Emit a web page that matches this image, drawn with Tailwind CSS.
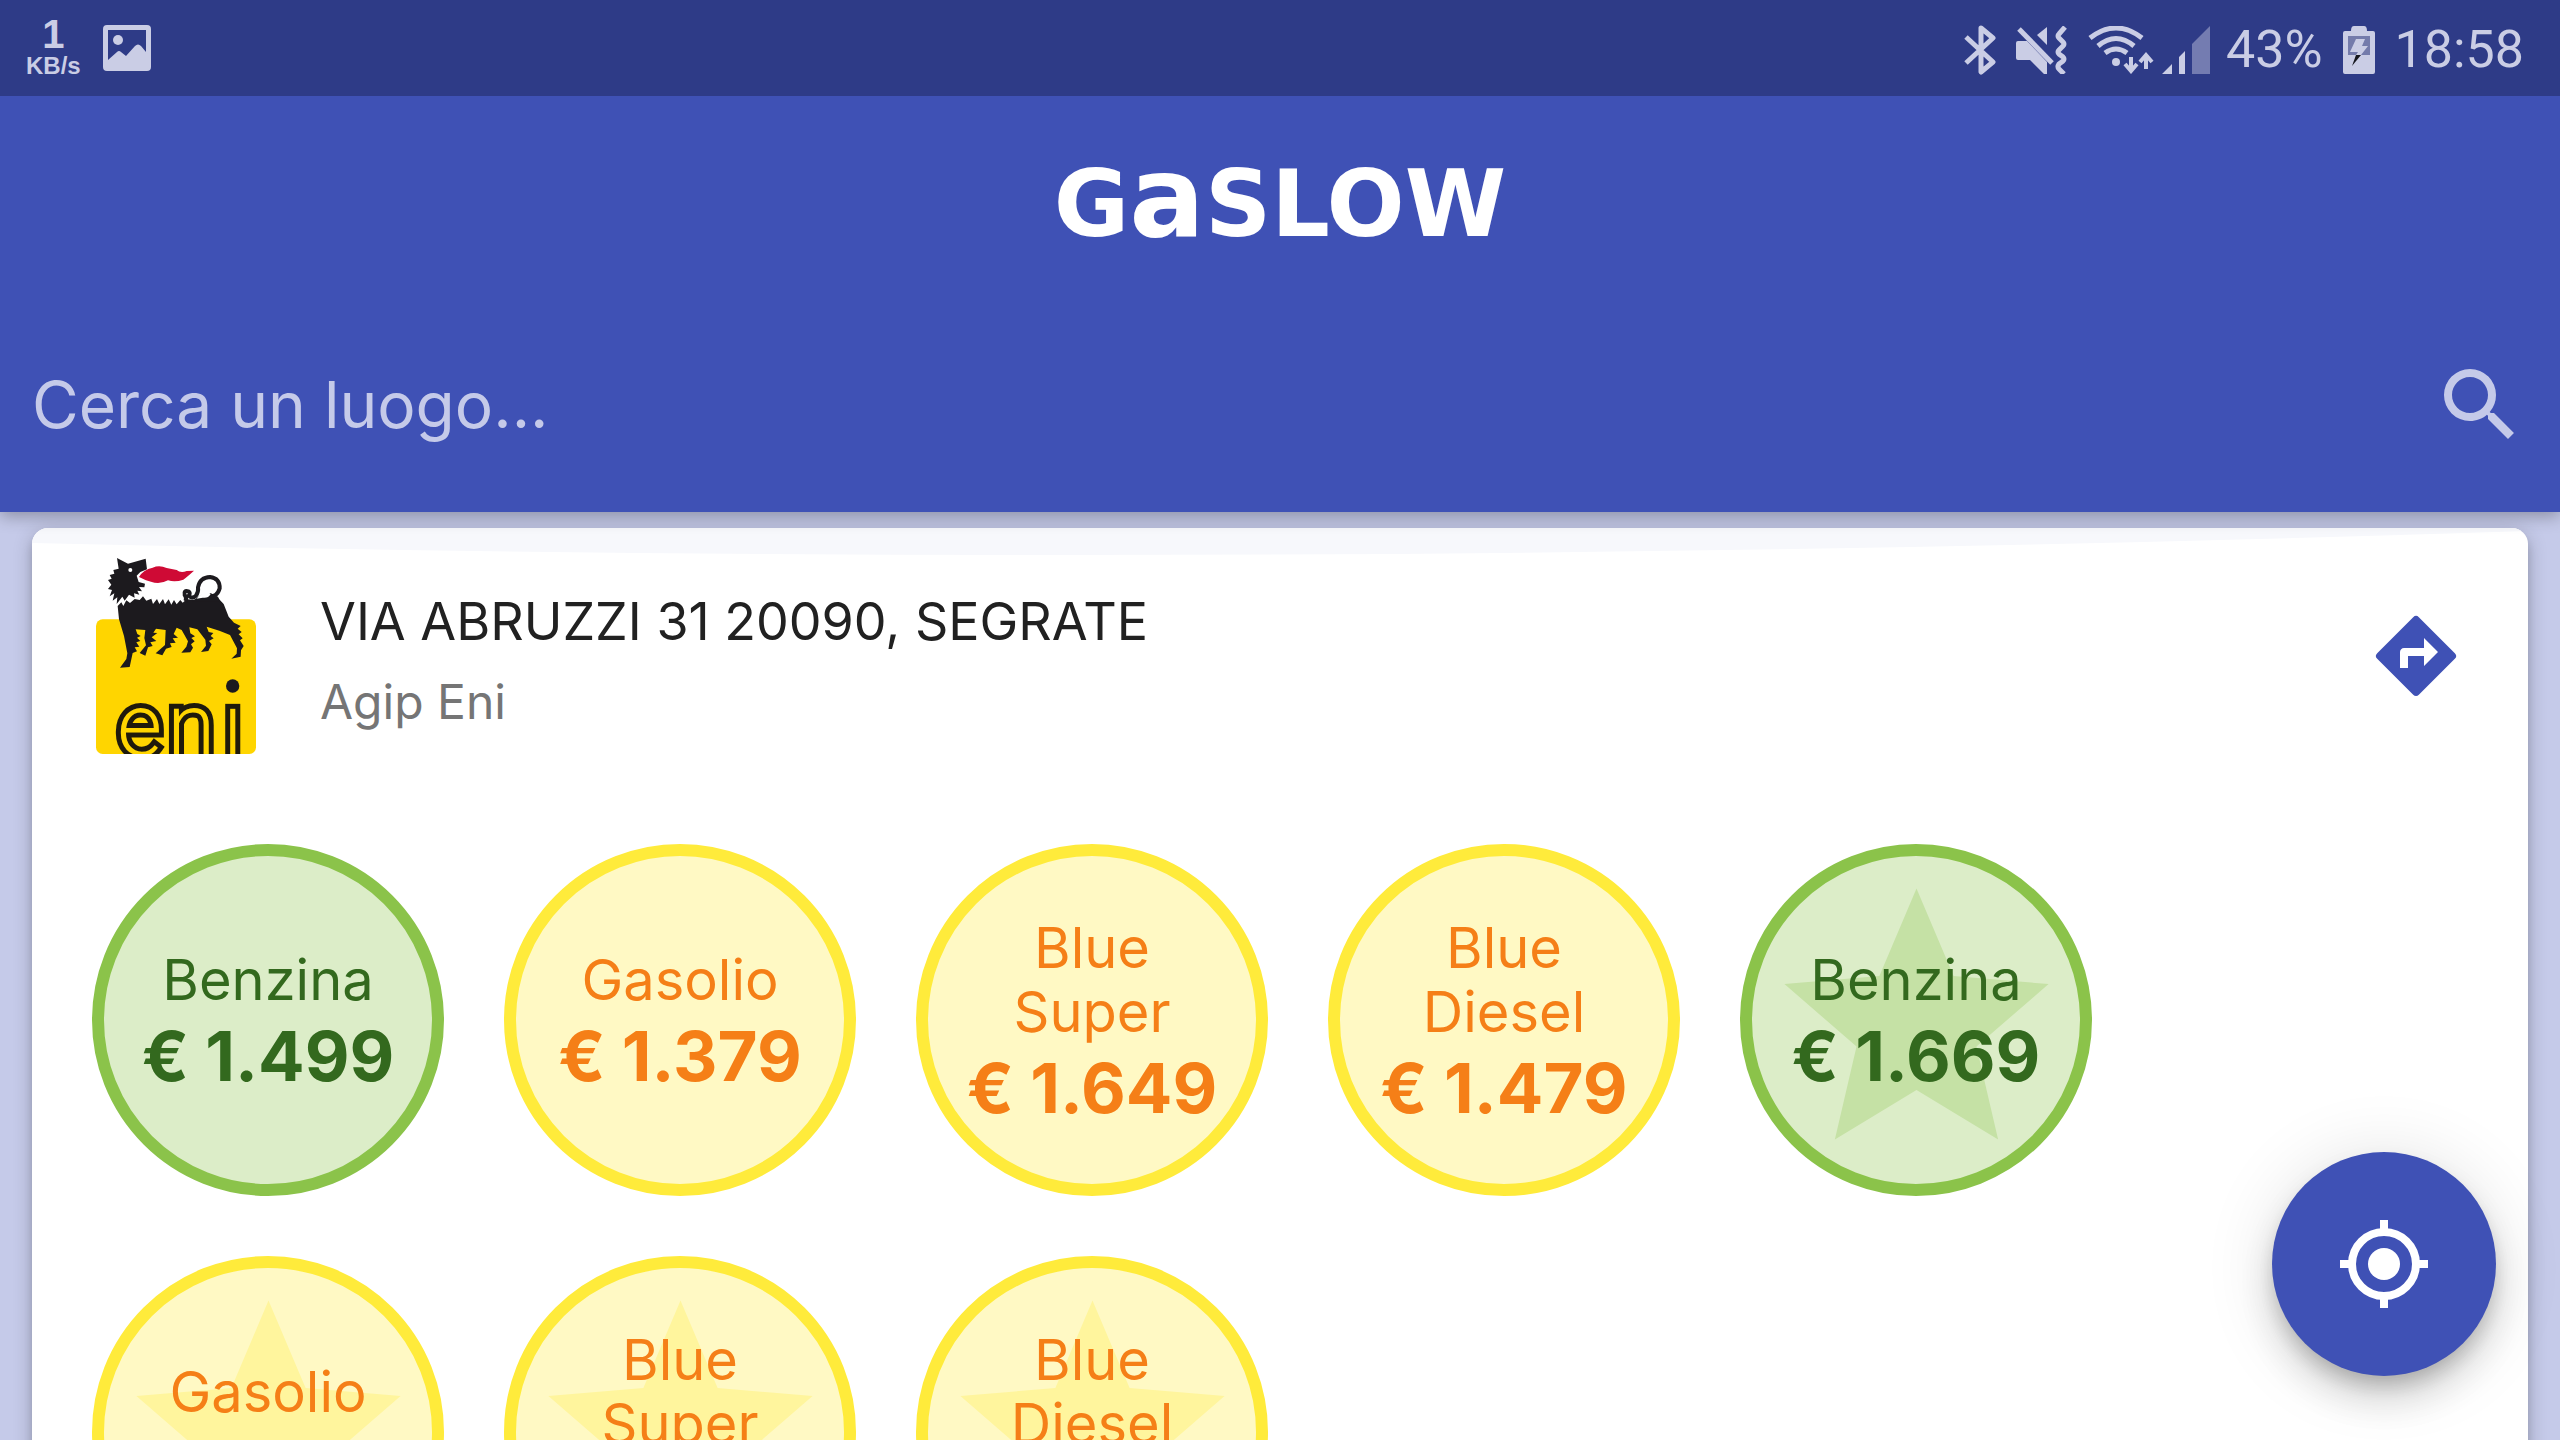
<!DOCTYPE html>
<html lang="it">
<head>
<meta charset="utf-8">
<meta name="viewport" content="width=device-width, initial-scale=1">
<title>GaSLOW</title>
<script src="https://cdn.jsdelivr.net/npm/@tailwindcss/browser@4"></script>
</head>
<body class="flex h-screen flex-col overflow-hidden bg-[#c5cae9] font-['Inter',sans-serif]">

<!-- Status bar -->
<div class="relative z-20 flex h-24 shrink-0 items-center justify-between bg-[#2e3b87] pr-9 pl-[26px] text-[#cacde5]">
  <div class="flex items-center gap-[22px]">
    <div class="flex flex-col items-center font-['Liberation_Sans',sans-serif] font-bold">
      <span class="text-[40px] leading-9">1</span>
      <span class="text-2xl leading-7">KB/s</span>
    </div>
    <svg class="h-[46px] w-12" viewBox="0 0 48 46" fill="currentColor" aria-hidden="true">
      <path fill-rule="evenodd" d="M4 0H44Q48 0 48 4V42Q48 46 44 46H4Q0 46 0 42V4Q0 0 4 0ZM5 5V35L14 27Q16 25 18 27L23 31L32 21Q35 18 38 21L43 27V5Z"/>
      <circle cx="15" cy="15" r="5"/>
    </svg>
  </div>
  <div class="flex items-center pt-1 font-['Roboto',sans-serif] text-[52px] leading-none">
    <svg class="h-[50px] w-8" viewBox="0 0 32 50" fill="none" stroke="currentColor" stroke-width="5" stroke-linejoin="round" aria-hidden="true">
      <path d="M2 12L29 37L17 47V3L29 13L2 38"/>
    </svg>
    <svg class="ml-5 h-12 w-[52px]" viewBox="0 0 52 48" fill="currentColor" aria-hidden="true">
      <path d="M2 15H11L31 36V48H28L14 34H2Q0 34 0 32V17Q0 15 2 15ZM31 1V19L21 9Z"/>
      <path d="M3 3L36 37" fill="none" stroke="currentColor" stroke-width="5"/>
      <path d="M49 1L43 8Q41 10 43 12L47 16Q49 18 47 20L43 24Q41 26 43 28L47 31Q49 33 47 35L43 38Q41 41 43 43L48 48" fill="none" stroke="currentColor" stroke-width="5"/>
    </svg>
    <svg class="ml-5 h-12 w-[66px]" viewBox="0 0 66 48" fill="none" stroke="currentColor" stroke-width="5" aria-hidden="true">
      <path d="M2 12Q28 -8 54 12M10 20Q28 5 46 20M17 27Q28 19 39 27"/>
      <circle cx="28" cy="36" r="4" fill="currentColor" stroke="none"/>
      <path d="M43 31V45M37 38L43 45L49 38M58 43V29M52 36L58 29L64 36" stroke-width="4"/>
    </svg>
    <svg class="ml-2 h-12 w-12" viewBox="0 0 48 48" fill="currentColor" aria-hidden="true">
      <path d="M0 48L10 38V48ZM17 31L23 25V48H17Z"/>
      <path d="M30 18L48 0V48H30Z" opacity=".45"/>
    </svg>
    <span class="ml-4">43%</span>
    <svg class="ml-5 h-12 w-8" viewBox="0 0 32 48" aria-hidden="true">
      <path fill="currentColor" d="M11 0H21Q24 0 24 5H30Q32 5 32 7V46Q32 48 30 48H2Q0 48 0 46V7Q0 5 2 5H8Q8 0 11 0Z"/>
      <path fill="#747bab" d="M5 10H27V29H5Z"/>
      <path fill="#cacde5" d="M13 13H22L19 20H25L18 29H13L15 26H7Z"/>
      <path fill="#15161d" d="M13 29H18L9 40Z"/>
    </svg>
    <span class="ml-5">18:58</span>
  </div>
</div>

<!-- App bar -->
<header class="z-10 flex h-[416px] shrink-0 flex-col bg-[#3f51b5] shadow-[0_4px_16px_rgba(0,0,0,0.3)]">
  <h1 class="flex h-[206px] items-center justify-center pb-1 font-['DejaVu_Sans',sans-serif] text-[92px] leading-none font-bold text-white"><span>G<span class="text-[112px] leading-none">a</span>SLOW</span></h1>
  <form class="flex h-[210px] items-center px-8 pb-1" onsubmit="return false">
    <input type="text" aria-label="Cerca un luogo" placeholder="Cerca un luogo..." class="h-24 min-w-0 flex-1 bg-transparent text-[64px] text-white outline-none placeholder:text-[#c5cae9]">
    <button type="submit" aria-label="Cerca" class="size-24 text-[#c5cae9]">
      <svg viewBox="0 0 24 24" fill="currentColor"><path d="M15.5 14h-.79l-.28-.27A6.471 6.471 0 0 0 16 9.500 6.500 6.500 0 1 0 9.500 16c1.610 0 3.090-.59 4.230-1.570l.27.28v.79l5 4.990L20.490 19l-4.990-5zm-6 0C7.010 14 5 11.990 5 9.500S7.010 5 9.500 5 14 7.010 14 9.500 11.990 14 9.500 14z"/></svg>
    </button>
  </form>
</header>

<!-- Station list -->
<main class="min-h-0 flex-1 px-8 pt-4">
  <article class="relative rounded-2xl bg-white shadow-[0_4px_20px_rgba(0,0,0,0.2),0_8px_8px_rgba(0,0,0,0.14),0_12px_4px_-8px_rgba(0,0,0,0.12)]">
    <svg class="absolute inset-x-0 top-0 h-7 w-full rounded-t-2xl" viewBox="0 0 100 28" preserveAspectRatio="none" aria-hidden="true"><path fill="#f7f8fc" d="M0 0H100V3Q50 44 0 15Z"/></svg>
    <div class="relative flex h-64 items-center px-16">
      <svg class="h-[196px] w-40 shrink-0" viewBox="108 84 480 588" role="img" aria-label="Agip Eni">
        <clipPath id="badge"><rect x="108" y="268" width="480" height="404" rx="20"/></clipPath>
        <rect x="108" y="268" width="480" height="404" rx="20" fill="#ffd500"/>
        <g fill="#1c1a1e">
          <path d="M171 84L204 101L257 86L261 118L241 126L230 137L236 156L255 161L253 172L237 171L246 184L232 182L238 194L222 190L224 203L207 194L194 212L187 200L170 222L172 202L158 212L163 190L149 199L156 180L144 177L154 164L144 150L155 146L149 135L163 131L160 120L176 116Z"/>
          <path d="M173 228L184 217L190 228L199 211L210 219L224 207L239 210L249 199L259 212L274 206L279 222L291 207L298 222L309 207L315 223L326 208L334 224L342 210L350 223L361 210L368 218L380 208L430 211L474 204L491 222L506 260L522 278L542 288L533 296L545 306L536 313L548 325L540 331L551 348L543 361L542 380L514 386L530 371L531 355L510 315L478 302L440 290L446 306L460 309L452 318L461 325L447 333L455 343L445 363L423 366L438 347L436 329L412 298L388 292L391 310L405 319L394 324L404 334L393 343L399 353L391 367L364 368L379 350L384 334L365 300L350 293L341 312L354 323L338 325L347 338L330 340L335 351L318 356L307 376L287 370L315 345L317 300L288 296L280 308L292 309L275 322L289 333L271 337L278 348L264 352L256 377L239 369L258 346L253 324L256 300L227 298L232 312L242 318L231 323L241 333L229 337L238 350L224 352L231 364L218 369L209 411L180 413L199 387L202 370L192 318L177 268Z"/>
        </g>
        <path d="M376 214Q382 205 374 195Q370 180 385 184Q393 188 386 197Q396 208 408 197Q416 186 414 172Q420 142 450 141Q480 145 479 175Q470 204 448 196" fill="none" stroke="#1c1a1e" stroke-width="12"/>
        <path fill="#1c1a1e" d="M396 214L424 194L452 190L474 200L480 214Z"/>
        <path fill="#fff" d="M410 206Q424 190 436 186Q446 186 452 192Q444 206 428 203Z"/>
        <circle cx="211" cy="120" r="6" fill="#fff"/>
        <path fill="#cf0a35" d="M237 141Q250 118 278 113Q298 104 320 114L350 120Q362 130 380 123L402 122Q382 140 370 149Q345 158 324 151Q298 165 273 155L258 151Z"/>
        <g clip-path="url(#badge)" stroke="#1f1a0c" font-family="Roboto, sans-serif" font-size="262" font-weight="300" fill="#ffd500" stroke-width="30" paint-order="stroke">
          <text x="171 322 489" y="674">enı</text>
        </g>
        <circle cx="518" cy="468" r="20" fill="#1c1a1e"/>
      </svg>
      <div class="ml-16 flex-1 pt-3">
        <h2 class="text-[52px] leading-[80px] text-[#212121]">VIA ABRUZZI 31 20090, SEGRATE</h2>
        <p class="text-5xl leading-[80px] text-[#757575]">Agip Eni</p>
      </div>
      <a href="#" aria-label="Indicazioni" class="size-24 text-[#3f51b5]">
        <svg viewBox="0 0 24 24" fill="currentColor"><path d="M21.710 11.290l-9-9a.996.996 0 0 0-1.410 0l-9 9a.996.996 0 0 0 0 1.410l9 9c.39.39 1.020.39 1.410 0l9-9a.996.996 0 0 0 0-1.410zM14 14.500V12h-4v3H8v-4c0-.55.45-1 1-1h5V7.500l3.500 3.500-3.500 3.500z"/></svg>
      </a>
    </div>
    <ul id="prices" class="flex flex-wrap gap-[60px] p-[60px] text-center"></ul>
  </article>
</main>

<button aria-label="La mia posizione" class="fixed right-16 bottom-16 z-10 flex size-56 items-center justify-center rounded-full bg-[#3f51b5] text-white shadow-[0_12px_20px_-4px_rgba(0,0,0,0.2),0_24px_40px_rgba(0,0,0,0.14),0_4px_72px_rgba(0,0,0,0.12)]">
  <svg class="size-24" viewBox="0 0 24 24" fill="none" stroke="currentColor" stroke-width="2"><circle cx="12" cy="12" r="4" fill="currentColor" stroke="none"/><circle cx="12" cy="12" r="8"/><path d="M12 1V4M12 20V23M1 12H4M20 12H23"/></svg>
</button>

<script>
  const prices = [
    ['Benzina', '1.499', 'green', false],
    ['Gasolio', '1.379', 'yellow', false],
    ['Blue Super', '1.649', 'yellow', false],
    ['Blue Diesel', '1.479', 'yellow', false],
    ['Benzina', '1.669', 'green', true],
    ['Gasolio', '1.549', 'yellow', true],
    ['Blue Super', '1.819', 'yellow', true],
    ['Blue Diesel', '1.649', 'yellow', true],
  ];
  const tone = {
    green: { disc: 'border-[#8bc34a] bg-[#dcedc8] text-[#33691e]', star: 'text-[#c5e1a5]' },
    yellow: { disc: 'border-[#ffeb3b] bg-[#fff9c4] text-[#f57f17]', star: 'text-[#fff59d]' },
  };
  const star = c => `<svg class="absolute -inset-full m-auto size-[317px] ${c}" viewBox="0 0 24 24" fill="currentColor" aria-hidden="true"><path d="M12 17.270L18.180 21l-1.640-7.030L22 9.240l-7.190-.61L12 2 9.190 8.630 2 9.240l5.460 4.730L5.820 21z"/></svg>`;
  document.getElementById('prices').innerHTML = prices.map(([name, price, t, self]) => `
    <li class="relative flex size-[352px] flex-col items-center justify-center rounded-full border-12 pt-2 ${tone[t].disc}">
      ${self ? star(tone[t].star) : ''}
      <span class="relative w-56 text-[56px] leading-16">${name.replace(' ', '<br>')}</span>
      <strong class="relative text-[69px] leading-[88px] font-bold whitespace-nowrap">€ ${price}</strong>
    </li>`).join('');
</script>
</body>
</html>
